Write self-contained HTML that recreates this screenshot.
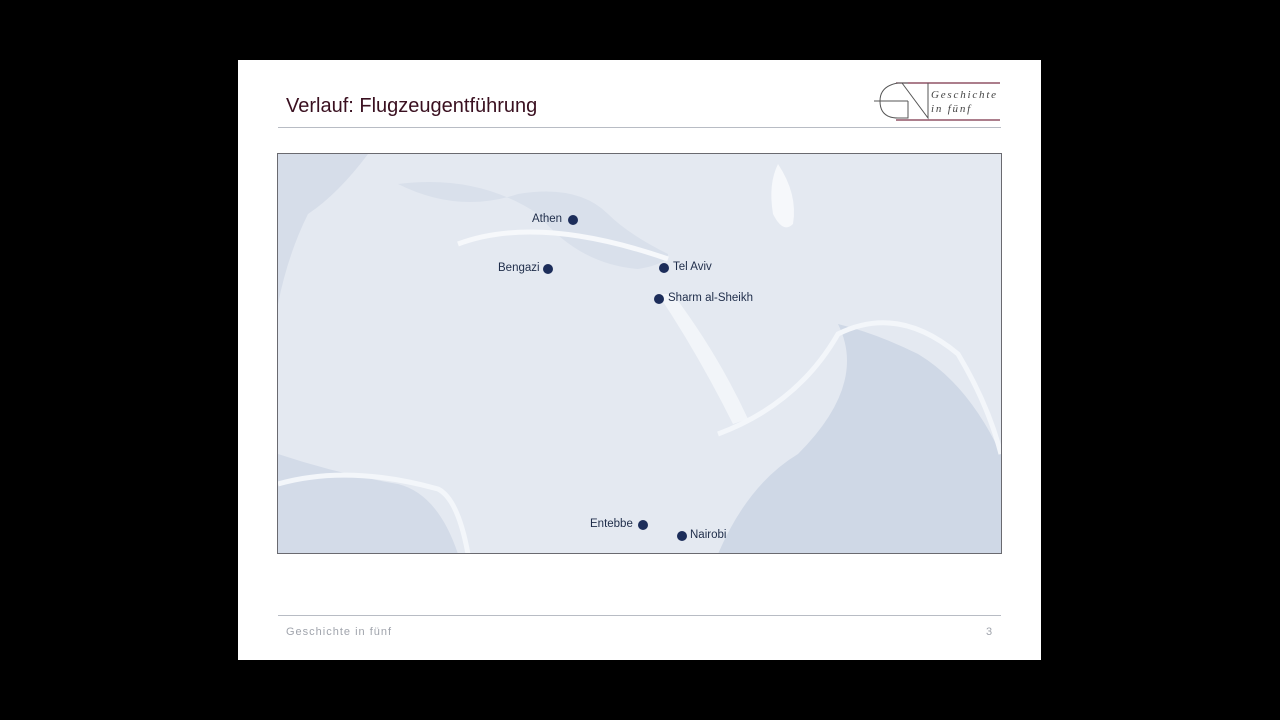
<!DOCTYPE html>
<html><head><meta charset="utf-8"><style>
body{margin:0;width:1280px;height:720px;background:#000;position:relative;overflow:hidden;font-family:"Liberation Sans",sans-serif}
.slide{position:absolute;left:238px;top:60px;width:803px;height:600px;background:#fff}
.title{position:absolute;left:48px;top:35px;font-size:20px;color:#3a1020}
.hr{position:absolute;left:40px;width:723px;height:1px;background:#b8bcc4}
.map{position:absolute;left:39px;top:93px;width:723px;height:399px;border:1px solid #6a6a70;overflow:hidden;background:#e4e9f1}
.lbl{position:absolute;font-size:11.5px;color:#1f2d4a}
.dot{position:absolute;width:10px;height:10px;border-radius:50%;background:#1c2d5a}
.foot{position:absolute;left:48px;top:566px;font-size:11px;color:#a0a4ac;letter-spacing:1px}
</style></head><body>
<div class="slide">
<div class="title">Verlauf: Flugzeugentführung</div>
<div class="hr" style="top:67px"></div>
<svg style="position:absolute;left:634px;top:20px" width="130" height="44" viewBox="0 0 130 44">
<line x1="24" y1="3" x2="128" y2="3" stroke="#7a3048" stroke-width="1.2"/>
<line x1="24" y1="40" x2="128" y2="40" stroke="#7a3048" stroke-width="1.2"/>
<line x1="2" y1="21" x2="36" y2="21" stroke="#555" stroke-width="1"/>
<path d="M36 3 L26 3 Q8 6 8 21 Q8 38 26 38 L36 38 L36 21" fill="none" stroke="#555"/>
<path d="M30 3 L56 38 L56 3" fill="none" stroke="#555"/>
<text x="59" y="18" font-family="Liberation Serif,serif" font-style="italic" font-size="11" fill="#444" letter-spacing="1.8">Geschichte</text>
<text x="59" y="32" font-family="Liberation Serif,serif" font-style="italic" font-size="11" fill="#444" letter-spacing="1.8">in fünf</text>
</svg>
<div class="map">
<svg width="723" height="399" style="position:absolute;left:0;top:0">
<path d="M0 0 H90 Q60 40 30 60 Q10 100 0 150 Z" fill="#d6dde9"/>
<path d="M120 30 Q200 20 260 60 Q300 110 360 115 Q390 110 390 100 Q350 80 330 60 Q300 30 240 40 Q180 60 120 30Z" fill="#d9e0eb"/>
<path d="M0 300 Q60 320 120 330 Q160 340 180 400 H0Z" fill="#d3dbe8"/>
<path d="M560 170 Q590 230 520 300 Q470 330 440 400 H723 V300 Q690 230 640 200 Q600 180 560 170Z" fill="#cfd8e6"/>
<path d="M500 10 Q520 40 515 70 Q505 80 495 60 Q490 30 500 10Z" fill="#f6f8fb"/>
<path d="M380 140 Q420 200 455 270 L470 265 Q440 200 395 140Z" fill="#f2f5f9"/>
<path d="M180 90 Q260 60 390 105" stroke="#f6f8fb" stroke-width="5" fill="none"/>
<path d="M0 330 Q70 310 160 335 Q180 345 190 400" stroke="#f3f6fa" stroke-width="5" fill="none"/>
<path d="M440 280 Q520 250 560 180 Q620 150 680 200 Q710 250 723 300" stroke="#f3f6fa" stroke-width="5" fill="none"/>
</svg>
<div class="lbl" style="left:254px;top:59px">Athen</div><div class="dot" style="left:290px;top:61px"></div>
<div class="lbl" style="left:220px;top:108px">Bengazi</div><div class="dot" style="left:265px;top:110px"></div>
<div class="lbl" style="left:395px;top:107px">Tel Aviv</div><div class="dot" style="left:381px;top:109px"></div>
<div class="lbl" style="left:390px;top:138px">Sharm al-Sheikh</div><div class="dot" style="left:376px;top:140px"></div>
<div class="lbl" style="left:312px;top:364px">Entebbe</div><div class="dot" style="left:360px;top:366px"></div>
<div class="lbl" style="left:412px;top:375px">Nairobi</div><div class="dot" style="left:399px;top:377px"></div>
</div>
<div class="hr" style="top:555px"></div>
<div class="foot" style="top:566px">Geschichte in fünf</div>
<div class="foot" style="left:748px;letter-spacing:0">3</div>
</div>
</body></html>
